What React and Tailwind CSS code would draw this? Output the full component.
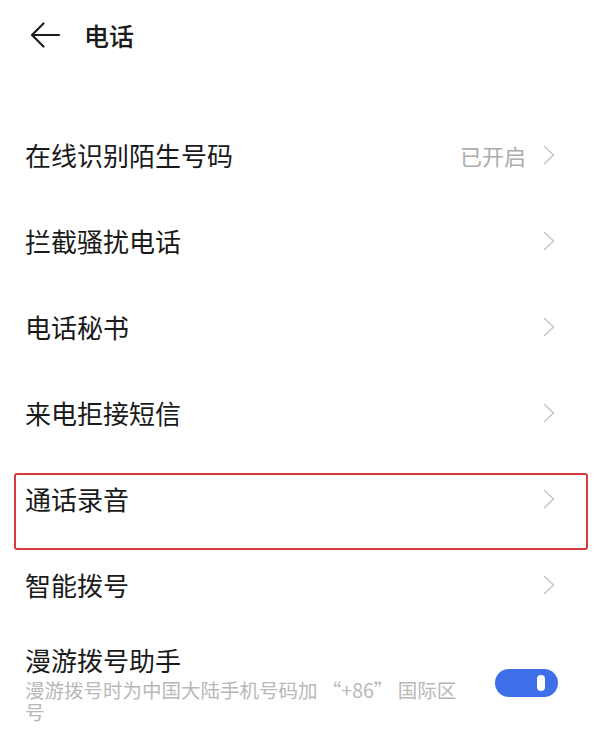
const font = { fontFamily: '"Noto Sans CJK SC", "Noto Sans", sans-serif' };

const rows = [
  { label: "在线识别陌生号码", value: "已开启" },
  { label: "拦截骚扰电话" },
  { label: "电话秘书" },
  { label: "来电拒接短信" },
  { label: "通话录音", marked: true },
  { label: "智能拨号" },
];

function BackArrow() {
  return (
    <svg width="30" height="26" viewBox="0 0 30 26" fill="none">
      <path
        d="M29 13H2M13.5 1.5L2 13l11.5 11.5"
        stroke="#1c1c1c"
        strokeWidth="2.2"
        strokeLinecap="round"
        strokeLinejoin="round"
      />
    </svg>
  );
}

function Chevron() {
  return (
    <svg width="12" height="20" viewBox="0 0 12 20" fill="none">
      <path
        d="M1.5 1.5L10.5 10l-9 8.5"
        stroke="#c8c8c8"
        strokeWidth="1.6"
        strokeLinecap="round"
        strokeLinejoin="round"
      />
    </svg>
  );
}

function SettingRow({ label, value, marked }) {
  return (
    <div className="relative flex h-[86px] items-center justify-between pl-[25px] pr-[44px]">
      <span className="text-[26px] leading-none text-[#1a1a1a]">{label}</span>
      <div className="flex items-center gap-[17px]">
        {value ? <span className="text-[22px] leading-none text-[#adadad]">{value}</span> : null}
        <Chevron />
      </div>
      {marked ? (
        <div className="pointer-events-none absolute left-[14px] top-[17px] h-[77px] w-[574px] rounded-[3px] border-2 border-[#d63a3a]" />
      ) : null}
    </div>
  );
}

export default function App() {
  return (
    <div className="min-h-[733px] w-[599px] bg-white" style={font}>
      <header className="flex h-[70px] items-center gap-[24px] pl-[30px]">
        <BackArrow />
        <h1 className="text-[25px] font-medium leading-none text-[#1a1a1a]">电话</h1>
      </header>

      <div className="mt-[42px]">
        {rows.map((row) => (
          <SettingRow key={row.label} {...row} />
        ))}

        <div className="flex items-start justify-between pl-[25px] pr-[41px] pt-[16px]">
          <div className="w-[445px]">
            <div className="text-[26px] leading-[32px] text-[#1a1a1a]">漫游拨号助手</div>
            <p className="mt-[3px] text-[19.5px] leading-[22px] text-[#b8b8b8]">
              漫游拨号时为中国大陆手机号码加 “+86” 国际区号
            </p>
          </div>
          <div className="mt-[25px] flex h-[28px] w-[63px] shrink-0 items-center justify-end rounded-full bg-[#3e6fe9] pr-[13px]">
            <div className="h-[16px] w-[8px] rounded-full bg-white" />
          </div>
        </div>
      </div>
    </div>
  );
}
